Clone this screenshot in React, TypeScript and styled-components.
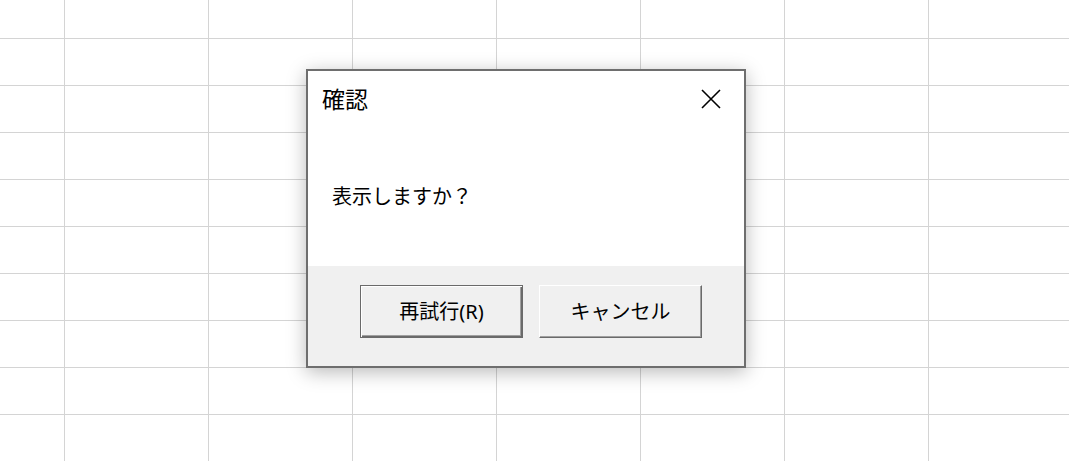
import React from "react";
import styled, { createGlobalStyle } from "styled-components";

const GlobalStyle = createGlobalStyle`
  html, body {
    margin: 0;
    padding: 0;
    background: #ffffff;
  }
  body {
    font-family: "Noto Sans", "Noto Sans CJK JP", sans-serif;
  }
`;

// spreadsheet behind the dialog
const Sheet = styled.div`
  position: relative;
  width: 1069px;
  height: 461px;
  overflow: hidden;
  background-color: #ffffff;
  background-image: linear-gradient(to right, #d4d4d4 1px, transparent 1px),
    linear-gradient(to bottom, #d4d4d4 1px, transparent 1px);
  background-size: 144px 47px;
  background-position: 64px 38px;
`;

const Dialog = styled.div`
  position: absolute;
  left: 306px;
  top: 69px;
  width: 440px;
  height: 299px;
  box-sizing: border-box;
  border: 2px solid #6e6e6e;
  display: flex;
  flex-direction: column;
  background: #ffffff;
  box-shadow: 0 4px 18px rgba(0, 0, 0, 0.28);
`;

const Content = styled.div`
  flex: 1;
  display: flex;
  flex-direction: column;
  background: #ffffff;
`;

const TitleBar = styled.div`
  height: 56px;
  display: flex;
  align-items: center;
  justify-content: space-between;
  padding: 0 23px 0 14px;
`;

const Title = styled.div`
  font-size: 23px;
  line-height: 24px;
  color: #000000;
`;

const CloseButton = styled.div`
  width: 20px;
  height: 20px;
  display: flex;
  align-items: center;
  justify-content: center;
`;

const Message = styled.div`
  margin-top: 60px;
  padding-left: 24px;
  font-size: 20px;
  line-height: 20px;
  color: #000000;
`;

const Footer = styled.div`
  height: 100px;
  background: #f0f0f0;
  display: flex;
  justify-content: flex-end;
  align-items: flex-start;
  gap: 16px;
  padding: 19px 42px 0 0;
  box-sizing: border-box;
`;

const Button = styled.div<{ $default?: boolean }>`
  width: 163px;
  height: 53px;
  box-sizing: border-box;
  background: #f0f0f0;
  display: flex;
  align-items: center;
  justify-content: center;
  font-size: 20px;
  line-height: 22px;
  color: #000000;
  border: 1px solid;
  border-color: ${(p) =>
    p.$default ? "#6a6a6a" : "#ffffff #6a6a6a #6a6a6a #ffffff"};
  box-shadow: ${(p) =>
    p.$default
      ? "inset 1px 1px 0 #ffffff, inset -1px -1px 0 #6a6a6a, inset -2px -2px 0 #a0a0a0"
      : "inset -1px -1px 0 #a0a0a0"};
`;

const CloseIcon = () => (
  <svg width="20" height="20" viewBox="0 0 20 20">
    <path d="M1 1 L19 19 M19 1 L1 19" stroke="#000" strokeWidth="1.6" fill="none" />
  </svg>
);

export default function App() {
  return (
    <>
      <GlobalStyle />
      <Sheet>
        <Dialog>
          <Content>
            <TitleBar>
              <Title>確認</Title>
              <CloseButton>
                <CloseIcon />
              </CloseButton>
            </TitleBar>
            <Message>表示しますか？</Message>
          </Content>
          <Footer>
            <Button $default>再試行(R)</Button>
            <Button>キャンセル</Button>
          </Footer>
        </Dialog>
      </Sheet>
    </>
  );
}
